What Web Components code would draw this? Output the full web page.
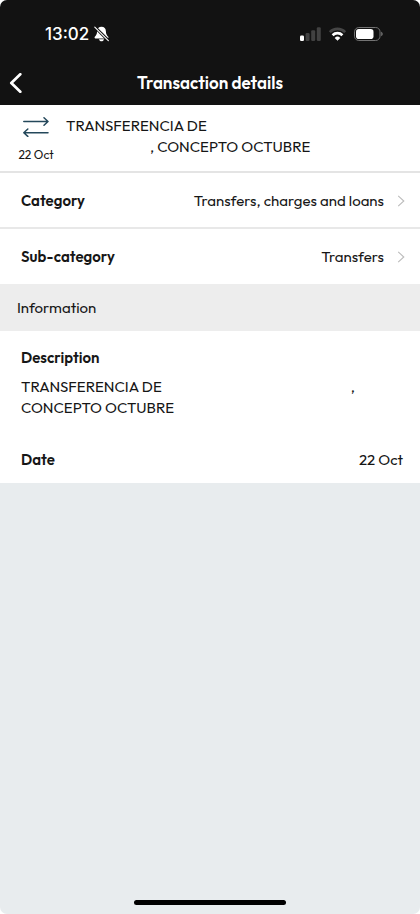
<!DOCTYPE html>
<html lang="en">
<head>
<meta charset="utf-8">
<meta name="viewport" content="width=device-width, initial-scale=1">
<title>Transaction details</title>
<style>
body { margin: 0; background: #fff; }
</style>
</head>
<body>
<app-screen>
  <status-bar slot="top" time="13:02"></status-bar>
  <nav-bar slot="top">Transaction details</nav-bar>
  <transaction-summary date="22 Oct">TRANSFERENCIA DE <redacted-gap size="line"></redacted-gap><redacted-gap size="short"></redacted-gap>, CONCEPTO OCTUBRE</transaction-summary>
  <link-row label="Category">Transfers, charges and loans</link-row>
  <link-row label="Sub-category" last>Transfers</link-row>
  <section-title>Information</section-title>
  <detail-block label="Description">TRANSFERENCIA DE <redacted-gap size="long"></redacted-gap><span>,</span> <span>CONCEPTO OCTUBRE</span></detail-block>
  <detail-row label="Date">22 Oct</detail-row>
</app-screen>
<script>
const define = (name, html) => customElements.define(name, class extends HTMLElement {
  constructor() {
    super();
    const template = document.createElement('template');
    template.innerHTML = html;
    this.attachShadow({ mode: 'open' }).append(template.content.cloneNode(true));
  }
  connectedCallback() {
    for (const name of ['label', 'date', 'time']) {
      const node = this.shadowRoot.querySelector('[data-' + name + ']');
      if (node) node.textContent = this.getAttribute(name);
    }
  }
});

define('app-screen', `
<style>
:host { display: flex; flex-direction: column; min-height: 100vh; background: #e8ecee; border-radius: 7px; overflow: hidden;
  font: 400 15px/21px Outfit, Lato, sans-serif; color: #161616; }
header { background: #121212; color: #fff; }
main { background: #fff; }
footer { margin-top: auto; padding: 9px 0; display: flex; justify-content: center; }
.home { width: 36%; height: 5px; border-radius: 3px; background: #000; }
</style>
<header><slot name="top"></slot></header>
<main><slot></slot></main>
<footer><div class="home"></div></footer>`);

define('status-bar', `
<style>
:host { display: flex; align-items: center; justify-content: space-between; height: 60px; padding: 8px 37px 0 45px; box-sizing: border-box; }
time { font: 500 17px/20px Inter, sans-serif; }
div { display: flex; align-items: center; }
.left { gap: 5px; }
.right { gap: 7px; }
svg { display: block; }
</style>
<div class="left"><time data-time></time>
<svg width="15" height="16" viewBox="0 0 15 16" aria-label="Silent"><path d="M7.500 .8C4.700.8 3.200 2.600 3.100 5.200 3 8.200 2.200 9.300.8 10.800c-.5.6-.2 1.600.6 1.600h12.200c.8 0 1.100-1 .6-1.600-1.400-1.500-2.200-2.600-2.300-5.600C11.800 2.600 10.300.8 7.500.8zM5 13.300h5C9.600 14.700 8.700 15.300 7.500 15.300s-2.100-.6-2.500-2z" fill="#fff"/><path d="M1 1.200 14.500 14.700" stroke="#121212" stroke-width="3"/><path d="M.8 1.200 14.300 14.700" stroke="#fff" stroke-width="1.100" stroke-linecap="round"/></svg></div>
<div class="right">
<svg width="21" height="14" viewBox="0 0 21 14" aria-label="Signal"><rect y="8.500" width="4" height="5.500" rx="1.200" fill="#fff"/><g fill="#414141"><rect x="5.600" y="6" width="4" height="8" rx="1.200"/><rect x="11.200" y="3.200" width="4" height="10.800" rx="1.200"/><rect x="16.800" y=".2" width="4" height="13.800" rx="1.200"/></g></svg>
<svg width="19" height="14" viewBox="0 0 19 14" aria-label="Wi-Fi"><g fill="none" stroke-width="2.700"><path d="M1.800 5.100a10.900 10.900 0 0 1 15.400 0" stroke="#454545"/><path d="M4.600 8.200a7 7 0 0 1 9.800 0" stroke="#fff"/></g><path d="M6.700 10.900a4 4 0 0 1 5.600 0L9.500 13.700z" fill="#fff"/></svg>
<svg width="29" height="14" viewBox="0 0 29 14" aria-label="Battery"><rect x=".5" y=".5" width="25.500" height="13" rx="4.300" fill="none" stroke="#737373"/><rect x="2" y="2" width="17.500" height="10" rx="2.800" fill="#fff"/><path d="M27.200 4.800c2 .7 2 3.700 0 4.400z" fill="#737373"/></svg>
</div>`);

define('nav-bar', `
<style>
:host { display: grid; grid-template-columns: 40px 1fr 40px; align-items: center; height: 45px; }
button { border: 0; background: none; color: inherit; padding: 0 0 0 9px; height: 45px; display: flex; align-items: center; }
h1 { margin: 0; text-align: center; font-size: 17px; line-height: 24px; font-weight: 600; }
</style>
<button aria-label="Back"><svg width="13" height="20" viewBox="0 0 13 20"><path d="M11.300 1.300 2.300 10l9 8.700" fill="none" stroke="#fff" stroke-width="2.700" stroke-linecap="round" stroke-linejoin="round"/></svg></button>
<h1><slot></slot></h1>`);

define('transaction-summary', `
<style>
:host { display: flex; padding: 10px 15px 8px 0; border-bottom: 2px solid #e4e4e4; }
.kind { flex: 0 0 66px; display: flex; flex-direction: column; align-items: center; padding: 2px 0 0 6px; box-sizing: border-box; }
time { font-size: 12px; line-height: 16px; margin-top: 10px; }
svg { display: block; }
p { margin: 0; flex: 1; }
</style>
<div class="kind"><svg width="26" height="20" viewBox="0 0 26 20" fill="none" stroke="#24485b" stroke-width="1.500" stroke-linecap="round" stroke-linejoin="round"><path d="M.8 4.500h24M21 .8l4 3.700-4 3.800M25 15.800H1M4.800 12l-4 3.800 4 3.600"/></svg><time data-date></time></div>
<p><slot></slot></p>`);

define('redacted-gap', `
<style>
:host { display: inline-block; width: 84px; height: 1px; }
:host([size="long"]) { width: 186px; }
:host([size="line"]) { width: 170px; }
</style>`);

define('link-row', `
<style>
:host { display: block; border-bottom: 2px solid #e8e8e8; }
:host([last]) { border-bottom: 0; padding-bottom: 1px; }
a { display: flex; align-items: center; justify-content: space-between; padding: 17px 15px 16px 21px; color: inherit; text-decoration: none; line-height: 21px; }
b { font-weight: 600; }
.value { display: flex; align-items: center; gap: 13px; }
svg { display: block; }
</style>
<a href="#"><b data-label></b><span class="value"><slot></slot><svg width="8" height="12" viewBox="0 0 8 12"><path d="M1.200.8 6.800 6l-5.600 5.200" fill="none" stroke="#bcbcbc" stroke-width="1.100"/></svg></span></a>`);

define('section-title', `
<style>
:host { display: block; background: #ededed; padding: 13px 17px; }
h2 { margin: 0; font: inherit; }
</style>
<h2><slot></slot></h2>`);

define('detail-block', `
<style>
:host { display: block; padding: 16px 15px 17px 21px; }
h3 { margin: 0 0 8px; font-size: 15px; font-weight: 600; }
p { margin: 0; }
</style>
<h3 data-label></h3><p><slot></slot></p>`);

define('detail-row', `
<style>
:host { display: flex; justify-content: space-between; padding: 14px 17px 13px 21px; }
b { font-weight: 600; }
</style>
<b data-label></b><span><slot></slot></span>`);
</script>
</body>
</html>
